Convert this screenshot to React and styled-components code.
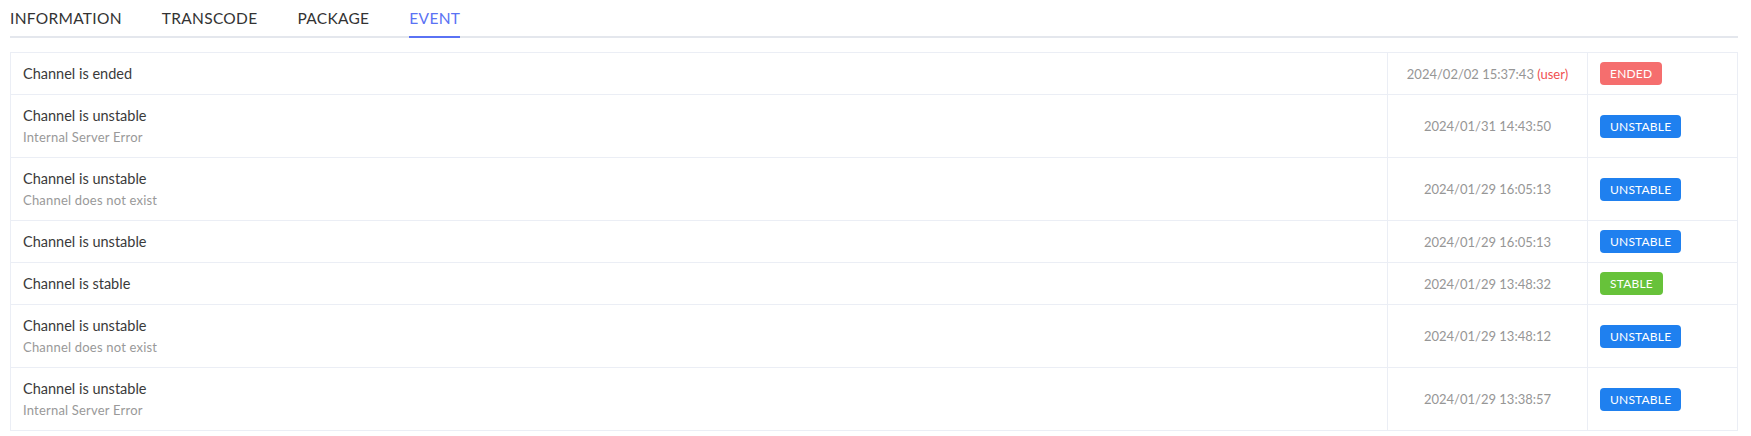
import styled, { createGlobalStyle } from "styled-components";
import { useState } from "react";

const GlobalStyle = createGlobalStyle`
  body {
    margin: 0;
    background: #fff;
    font-family: Lato, "Open Sans", sans-serif;
  }
`

const tabs = ['INFORMATION', 'TRANSCODE', 'PACKAGE', 'EVENT']

const events = [
    {title: 'Channel is ended', date: '2024/02/02 15:37:43', by: 'user', status: 'ended'},
    {title: 'Channel is unstable', detail: 'Internal Server Error', date: '2024/01/31 14:43:50', status: 'unstable'},
    {title: 'Channel is unstable', detail: 'Channel does not exist', date: '2024/01/29 16:05:13', status: 'unstable'},
    {title: 'Channel is unstable', date: '2024/01/29 16:05:13', status: 'unstable'},
    {title: 'Channel is stable', date: '2024/01/29 13:48:32', status: 'stable'},
    {title: 'Channel is unstable', detail: 'Channel does not exist', date: '2024/01/29 13:48:12', status: 'unstable'},
    {title: 'Channel is unstable', detail: 'Internal Server Error', date: '2024/01/29 13:38:57', status: 'unstable'},
]

const badgeColor = {
    ended: '#f56e6e',
    unstable: '#1f80ef',
    stable: '#67c23a',
}

export default function App() {
    const [tab, setTab] = useState('EVENT')

    return <>
        <GlobalStyle/>
        <Page>
            <TabBar>
                {tabs.map(t =>
                    <Tab key={t} active={t === tab} onClick={() => setTab(t)}>{t}</Tab>
                )}
            </TabBar>

            <Table>
                {events.map((e, i) =>
                    <Row key={i}>
                        <MessageCell double={!!e.detail}>
                            <Title>{e.title}</Title>
                            {e.detail && <Detail>{e.detail}</Detail>}
                        </MessageCell>
                        <DateCell>
                            {e.date}
                            {e.by && <By> ({e.by})</By>}
                        </DateCell>
                        <StatusCell>
                            <Badge color={badgeColor[e.status]}>{e.status}</Badge>
                        </StatusCell>
                    </Row>
                )}
            </Table>
        </Page>
    </>
}

const Page = styled.div`
  padding: 0 13px 0 10px;
`

const TabBar = styled.div`
  display: flex;
  gap: 40px;
  height: 36px;
  border-bottom: 2px solid #e4e7ed;
`

const Tab = styled.div`
  height: 36px;
  line-height: 36px;
  font-size: 15.5px;
  letter-spacing: 0.3px;
  color: ${props => props.active ? '#5a72f4' : '#333'};
  border-bottom: 2px solid ${props => props.active ? '#5a72f4' : 'transparent'};
  cursor: pointer;
`

const Table = styled.div`
  margin-top: 14px;
  border: 1px solid #ebeef5;
  border-bottom: none;
`

const Row = styled.div`
  display: grid;
  grid-template-columns: 1fr 200px 150px;
  border-bottom: 1px solid #ebeef5;
`

const MessageCell = styled.div`
  padding: ${props => props.double ? '10px 12px 8px' : '10px 12px'};
`

const Title = styled.div`
  font-size: 14.5px;
  line-height: 21px;
  color: #3a3a3a;
`

const Detail = styled.div`
  font-size: 13px;
  letter-spacing: 0.2px;
  line-height: 23px;
  color: #999;
`

const DateCell = styled.div`
  display: flex;
  align-items: center;
  justify-content: center;
  white-space: pre;
  border-left: 1px solid #ebeef5;
  font-size: 13px;
  color: #969696;
`

const By = styled.span`
  color: #f0504f;
`

const StatusCell = styled.div`
  display: flex;
  align-items: center;
  padding-left: 12px;
  border-left: 1px solid #ebeef5;
`

const Badge = styled.span`
  height: 23px;
  line-height: 23px;
  padding: 0 10px;
  border-radius: 4px;
  background: ${props => props.color};
  color: #fff;
  font-size: 12px;
  letter-spacing: 0.2px;
  text-transform: uppercase;
`
